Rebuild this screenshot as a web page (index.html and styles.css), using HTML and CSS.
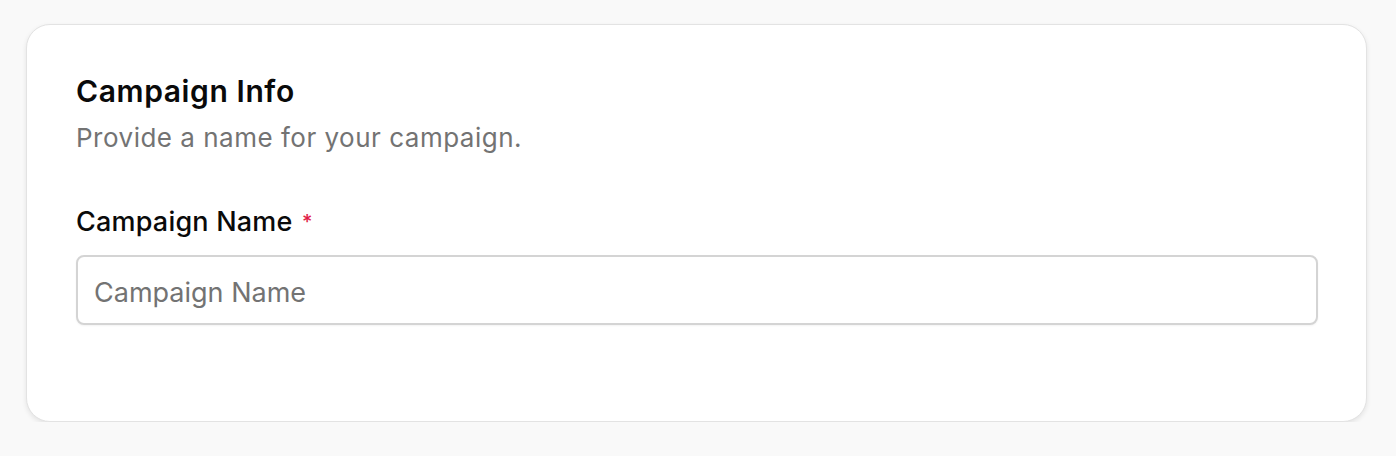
FILE: index.html
```html
<!DOCTYPE html>
<html>
<head>
<meta charset="utf-8">
<link rel="stylesheet" href="styles.css">
</head>
<body>
<div class="page">
  <section class="card">
    <h2 class="title">Campaign Info</h2>
    <p class="subtitle">Provide a name for your campaign.</p>
    <div class="field">
      <label class="label" for="cname">Campaign Name <span class="req">*</span></label>
      <input id="cname" class="input" type="text" placeholder="Campaign Name">
    </div>
  </section>
</div>
</body>
</html>
```

FILE: styles.css
```css
html, body {
  margin: 0;
  padding: 0;
  background: #f9f9f9;
  font-family: Inter, "Noto Sans", sans-serif;
}
.page {
  padding: 24px 29px 0 26px;
}
.card {
  background: #ffffff;
  border: 1px solid #e3e3e3;
  border-radius: 24px;
  box-shadow: 0 2px 5px rgba(0,0,0,0.09);
  padding: 48px 48px 0 49px;
  height: 398px;
  box-sizing: border-box;
}
.title {
  margin: 0;
  font-size: 30px;
  line-height: 36px;
  font-weight: 600;
  letter-spacing: 0.6px;
  color: #0a0a0a;
}
.subtitle {
  margin: 13px 0 0 0;
  font-size: 26px;
  line-height: 32px;
  letter-spacing: 0.5px;
  color: #737373;
}
.field {
  margin-top: 52px;
  display: flex;
  flex-direction: column;
  gap: 17px;
}
.label {
  font-size: 27px;
  line-height: 32px;
  font-weight: 500;
  letter-spacing: 0.2px;
  color: #0a0a0a;
}
.req {
  color: #e11d48;
  font-size: 20px;
  vertical-align: top;
  margin-left: 2px;
}
.input {
  height: 70px;
  box-sizing: border-box;
  border: 2px solid #d4d4d4;
  border-radius: 8px;
  padding: 4px 16px 0 16px;
  font-family: inherit;
  font-size: 27px;
  letter-spacing: 0;
  color: #0a0a0a;
  background: #fff;
  box-shadow: 0 1px 2px rgba(0,0,0,0.05);
  outline: none;
}
.input::placeholder {
  color: #737373;
}
```
